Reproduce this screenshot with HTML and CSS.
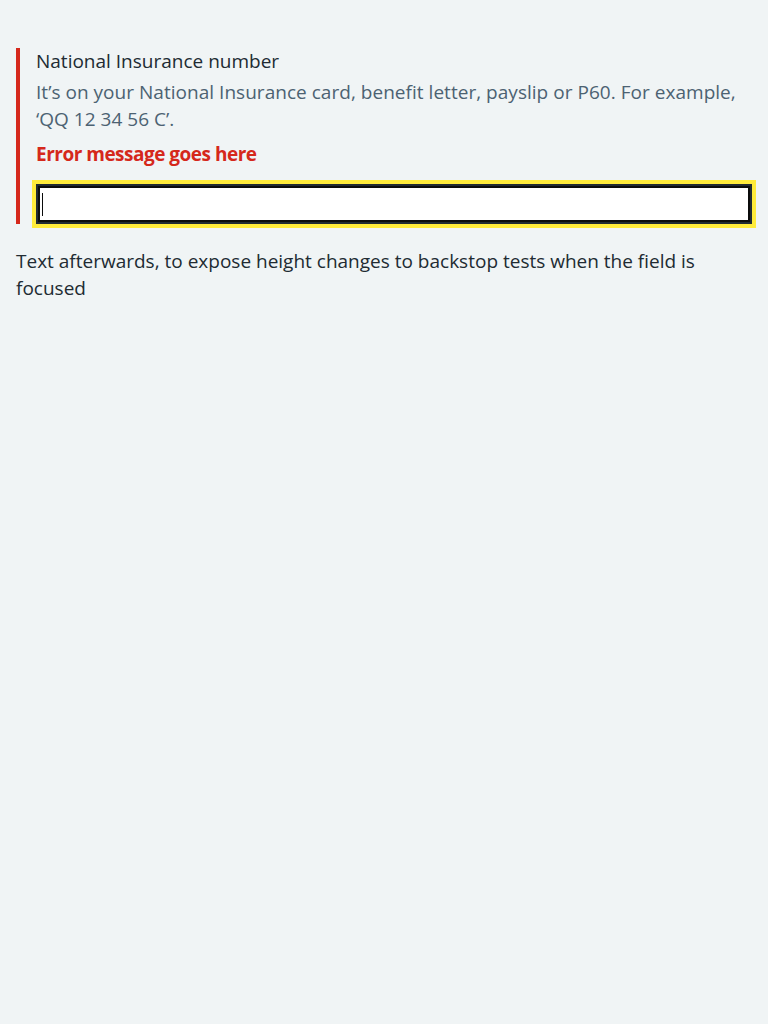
FILE: index.html
```html
<!DOCTYPE html>
<html lang="en">
<head>
<meta charset="utf-8">
<title>Input error focused</title>
<link rel="stylesheet" href="styles.css">
</head>
<body>
<main class="page">
  <div class="form-group form-group--error">
    <label class="label" for="ni">National Insurance number</label>
    <div class="hint">It’s on your National Insurance card, benefit letter, payslip or P60. For example, ‘QQ 12 34 56 C’.</div>
    <span class="error-message">Error message goes here</span>
    <span class="input-wrap"><input class="input input--focused" id="ni" type="text"></span>
  </div>
  <p class="body">Text afterwards, to expose height changes to backstop tests when the field is focused</p>
</main>
</body>
</html>
```
FILE: styles.css
```css
html, body {
  margin: 0;
  padding: 0;
  background: #f0f4f5;
}

body {
  font-family: "Open Sans", "Noto Sans", sans-serif;
  color: #212b32;
  font-size: 19px;
  line-height: 27px;
}

.page {
  padding: 48px 16px 0;
}

.form-group {
  margin-bottom: 24px;
}

.form-group--error {
  border-left: 4px solid #d5281b;
  padding-left: 16px;
}

.label {
  display: block;
  margin-bottom: 4px;
}

.hint {
  color: #4c6272;
  margin-bottom: 8px;
  letter-spacing: 0.03px;
}

.error-message {
  display: block;
  color: #d5281b;
  font-weight: 700;
  margin-bottom: 16px;
  letter-spacing: -0.5px;
}

.input-wrap {
  display: block;
  position: relative;
}

.input {
  display: block;
  box-sizing: border-box;
  width: 100%;
  height: 40px;
  margin: 0;
  padding: 4px;
  border: 2px solid #212b32;
  border-radius: 0;
  background: #ffffff;
  font: inherit;
  color: #212b32;
  -webkit-appearance: none;
  appearance: none;
}

.input--focused {
  outline: 4px solid #ffeb3b;
  outline-offset: 0;
  box-shadow: inset 0 0 0 2px #0b0c0c;
}

.input-wrap::after {
  content: "";
  position: absolute;
  left: 6px;
  top: 9px;
  width: 1px;
  height: 23px;
  background: #0b0c0c;
}

.body {
  margin: 0;
}
```
